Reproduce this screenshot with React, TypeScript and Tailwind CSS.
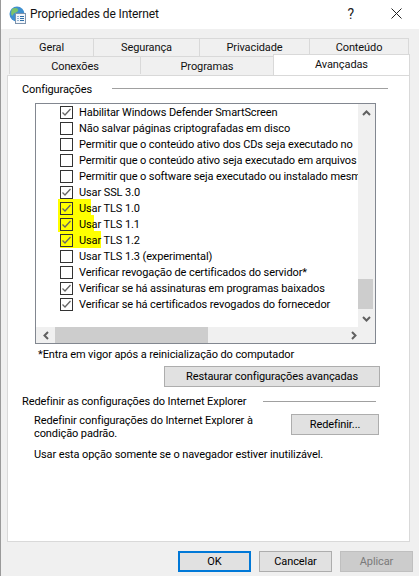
const rows: { label: string; checked: boolean; mark?: string }[] = [
  { label: 'Habilitar Windows Defender SmartScreen', checked: true },
  { label: 'Não salvar páginas criptografadas em disco', checked: false },
  { label: 'Permitir que o conteúdo ativo dos CDs seja executado no', checked: false },
  { label: 'Permitir que o conteúdo ativo seja executado em arquivos', checked: false },
  { label: 'Permitir que o software seja executado ou instalado mesm', checked: false },
  { label: 'Usar SSL 3.0', checked: true },
  { label: 'Usar TLS 1.0', checked: true, mark: 'left-[22px] w-[33px]' },
  { label: 'Usar TLS 1.1', checked: true, mark: 'left-[22px] w-[36px]' },
  { label: 'Usar TLS 1.2', checked: true, mark: 'left-[24px] w-[41px]' },
  { label: 'Usar TLS 1.3 (experimental)', checked: false },
  { label: 'Verificar revogação de certificados do servidor*', checked: false },
  { label: 'Verificar se há assinaturas em programas baixados', checked: true },
  { label: 'Verificar se há certificados revogados do fornecedor', checked: true },
];

function Tab({ label, width, className = '' }: { label: string; width: string; className?: string }) {
  return (
    <div className={`${width} h-[18px] border-l border-t border-[#d9d9d9] last:border-r flex items-center justify-center bg-[#f0f0f0] ${className}`}>
      {label}
    </div>
  );
}

function Check({ checked }: { checked: boolean }) {
  return (
    <span className="relative w-[13px] h-[13px] border border-[#333333] shrink-0">
      {checked && (
        <svg className="absolute left-0 top-0" width="11" height="11" viewBox="0 0 11 11" fill="none">
          <path d="M1.5 5.5 L4 8 L9.5 2" stroke="#666666" strokeWidth="1.3" />
        </svg>
      )}
    </span>
  );
}

function Arrow({ d }: { d: string }) {
  return (
    <svg width="9" height="9" viewBox="0 0 9 9" fill="none">
      <path d={d} stroke="#606060" strokeWidth="2" />
    </svg>
  );
}

function Button({ label, className }: { label: string; className: string }) {
  return (
    <button className={`h-[21px] bg-[#e1e1e1] border border-[#adadad] flex items-center justify-center ${className}`}>
      {label}
    </button>
  );
}

export default function App() {
  return (
    <div className="w-[419px] h-[576px] bg-[#f0f0f0] text-black text-[11px] tracking-[-0.1px] overflow-hidden border-l border-[#9a9a9a] font-['Roboto','Noto_Sans',sans-serif] leading-none">
      {/* Title bar */}
      <div className="h-[29px] bg-white flex items-center pl-[8px]">
        <svg width="17" height="18" viewBox="0 0 17 18" className="shrink-0">
          <circle cx="8" cy="8" r="7.5" fill="#3f8fd0" />
          <path d="M3 3 C6 1 10 2 9 5 C8 7 5 6 4 9 C3 11 1 8 3 3Z" fill="#7cc36a" />
          <path d="M11 9 C13 8 15 9 14 11 C13 13 11 12 11 9Z" fill="#7cc36a" />
          <rect x="6.5" y="7.5" width="10" height="10" fill="#f4f7fb" stroke="#7d93ad" />
          <path d="M8.5 10.5h1M11 10.5h4M8.5 12.5h1M11 12.5h4M8.5 14.5h1M11 14.5h4" stroke="#2f6fa8" />
        </svg>
        <span className="ml-[4px] -mt-[2px] text-[12px] text-[#111111]">Propriedades de Internet</span>
        <span className="ml-auto -mt-[2px] text-[14px] text-[#222222] mr-[37px]">?</span>
        <svg width="11" height="11" viewBox="0 0 11 11" className="mr-[17px] -mt-[2px]" fill="none">
          <path d="M0.5 0.5 L10.5 10.5 M10.5 0.5 L0.5 10.5" stroke="#222222" />
        </svg>
      </div>

      {/* Tabs */}
      <div className="pt-[9px] pl-[8px] text-[#111111]">
        <div className="flex">
          <Tab label="Geral" width="w-[84px]" />
          <Tab label="Segurança" width="w-[106px]" />
          <Tab label="Privacidade" width="w-[110px]" />
          <Tab label="Conteúdo" width="w-[100px]" />
        </div>
        <div className="flex">
          <Tab label="Conexões" width="w-[131px]" className="pt-[2px]" />
          <Tab label="Programas" width="w-[133px]" className="pt-[2px]" />
          <div className="relative z-10 -mt-[2px] w-[137px] h-[21px] bg-white border-x border-t border-[#d9d9d9] flex items-start justify-center pt-[4px]">
            Avançadas
          </div>
        </div>
      </div>

      {/* Panel */}
      <div className="ml-[6px] w-[403px] h-[467px] bg-white border border-[#d9d9d9]">
        <div className="pl-[14px] mt-[6px] h-[14px] flex items-center">
          <span className="w-[90px]">Configurações</span>
          <span className="-mt-[2px] w-[276px] h-px bg-[#a0a0a0]" />
        </div>

        {/* List box */}
        <div className="ml-[27px] mt-[7px] w-[341px] h-[241px] border border-[#828790] flex flex-col">
          <div className="flex h-[223px]">
            <div className="w-[322px] overflow-hidden">
              {rows.map((r) => (
                <div key={r.label} className="relative h-[16px] pl-[24px] flex items-center whitespace-nowrap">
                  {r.mark && <span className={`absolute top-[-1px] h-[17px] bg-[#ffff00] ${r.mark}`} />}
                  <span className="relative flex items-center">
                    <Check checked={r.checked} />
                    <span className="ml-[6px]">{r.label}</span>
                  </span>
                </div>
              ))}
            </div>
            <div className="w-[17px] bg-[#f0f0f0] flex flex-col items-center">
              <div className="h-[17px] flex items-center justify-center mt-[1px]"><Arrow d="M1 6 L4.5 2.5 L8 6" /></div>
              <div className="flex-1 w-full">
                <div className="mt-[157px] w-[15px] h-[30px] bg-[#cdcdcd]" />
              </div>
              <div className="h-[17px] flex items-center justify-center"><Arrow d="M1 3 L4.5 6.5 L8 3" /></div>
            </div>
          </div>
          <div className="h-[16px] bg-[#f0f0f0] flex items-center">
            <div className="w-[18px] flex justify-center ml-[1px]"><Arrow d="M6 1 L2.5 4.5 L6 8" /></div>
            <div className="w-[153px] h-full bg-[#cdcdcd]" />
            <div className="ml-[137px] w-[17px] flex justify-center"><Arrow d="M3 1 L6.5 4.5 L3 8" /></div>
          </div>
        </div>

        <div className="pl-[30px] mt-[3px] h-[14px] flex items-center">*Entra em vigor após a reinicialização do computador</div>
        <div className="flex justify-end pr-[29px] mt-[5px]">
          <Button label="Restaurar configurações avançadas" className="w-[216px]" />
        </div>

        <div className="pl-[14px] mt-[7px] h-[14px] flex items-center">
          <span className="w-[241px]">Redefinir as configurações do Internet Explorer</span>
          <span className="w-[113px] h-px bg-[#a0a0a0]" />
        </div>
        <div className="flex pl-[26px] mt-[6px]">
          <p className="w-[240px] leading-[13px]">Redefinir configurações do Internet Explorer à condição padrão.</p>
          <Button label="Redefinir..." className="ml-[17px] w-[88px]" />
        </div>
        <p className="pl-[26px] mt-[8px] leading-[13px]">Usar esta opção somente se o navegador estiver inutilizável.</p>
      </div>

      {/* Footer */}
      <div className="flex justify-end pr-[6px] pt-[9px] gap-[8px]">
        <Button label="OK" className="w-[73px] !border-2 !border-[#0078d7]" />
        <Button label="Cancelar" className="w-[73px]" />
        <Button label="Aplicar" className="w-[73px] !bg-[#cccccc] !border-[#bfbfbf] text-[#7a7a7a]" />
      </div>
    </div>
  );
}
